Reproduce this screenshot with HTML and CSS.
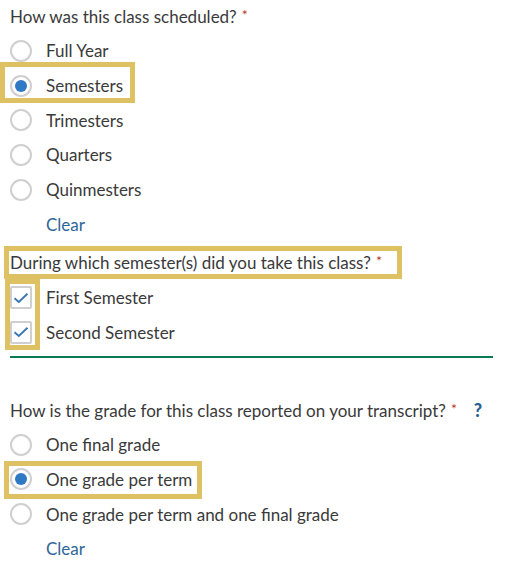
FILE: index.html
```html
<!DOCTYPE html>
<html lang="en">
<head>
<meta charset="utf-8">
<title>Class schedule</title>
<link rel="stylesheet" href="styles.css">
</head>
<body>
<form class="form">
  <fieldset class="group">
    <div class="question q-first"><span class="qtext">How was this class scheduled?</span><span class="req">*</span></div>
    <div class="row"><span class="radio"></span><span class="opt">Full Year</span></div>
    <div class="row hl hl-sem"><span class="radio checked"></span><span class="opt">Semesters</span></div>
    <div class="row"><span class="radio"></span><span class="opt">Trimesters</span></div>
    <div class="row"><span class="radio"></span><span class="opt">Quarters</span></div>
    <div class="row"><span class="radio"></span><span class="opt">Quinmesters</span></div>
    <div class="row"><a class="clear" href="#">Clear</a></div>
  </fieldset>

  <fieldset class="group group-checks">
    <div class="question hl hl-q2"><span class="qtext">During which semester(s) did you take this class?</span><span class="req">*</span></div>
    <div class="checks hl hl-checks">
      <div class="row"><span class="check"><svg viewBox="0 0 16 16" width="16" height="16"><path d="M1.5 8.3 L5.8 12 L14.5 3.8" fill="none" stroke="#3b77b3" stroke-width="1.9"/></svg></span><span class="opt">First Semester</span></div>
      <div class="row"><span class="check"><svg viewBox="0 0 16 16" width="16" height="16"><path d="M1.5 8.3 L5.8 12 L14.5 3.8" fill="none" stroke="#3b77b3" stroke-width="1.9"/></svg></span><span class="opt">Second Semester</span></div>
    </div>
    <div class="divider"></div>
  </fieldset>

  <fieldset class="group group-grade">
    <div class="question"><span class="qtext">How is the grade for this class reported on your transcript?</span><span class="req">*</span><span class="help">?</span></div>
    <div class="row"><span class="radio"></span><span class="opt">One final grade</span></div>
    <div class="row hl hl-term"><span class="radio checked"></span><span class="opt">One grade per term</span></div>
    <div class="row"><span class="radio"></span><span class="opt">One grade per term and one final grade</span></div>
    <div class="row"><a class="clear" href="#">Clear</a></div>
  </fieldset>
</form>
</body>
</html>
```

FILE: styles.css
```css
html, body {
  margin: 0;
  padding: 0;
  background: #ffffff;
}

body {
  font-family: Lato, "Noto Sans", sans-serif;
  font-size: 17px;
  color: #3a3a3a;
}

.form {
  padding: 0 0 0 10px;
}

.group {
  border: 0;
  margin: 0;
  padding: 0;
  min-width: 0;
}

.question {
  height: 34.7px;
  display: flex;
  align-items: center;
  position: relative;
}

.q-first {
  height: 33.5px;
}

.req {
  color: #b5332b;
  font-size: 14px;
  margin-left: 5px;
  transform: translateY(-2px);
}

.help {
  color: #2b5f93;
  font-weight: 900;
  font-size: 18px;
  margin-left: 17px;
}

.row {
  height: 34.7px;
  display: flex;
  align-items: center;
  gap: 14px;
  position: relative;
}

.radio {
  width: 22px;
  height: 22px;
  box-sizing: border-box;
  border: 2px solid #cfcfcf;
  border-radius: 50%;
  flex: none;
  display: flex;
  align-items: center;
  justify-content: center;
}

.radio.checked::before {
  content: "";
  width: 12px;
  height: 12px;
  border-radius: 50%;
  background: #3079c4;
}

.check {
  width: 22px;
  height: 23px;
  box-sizing: border-box;
  border: 2px solid #cfcfcf;
  border-radius: 2px;
  flex: none;
  display: flex;
  align-items: center;
  justify-content: center;
}

.clear {
  color: #2f6699;
  text-decoration: none;
  margin-left: 36px;
}

.hl::after {
  content: "";
  position: absolute;
  border: 5px solid #ddc163;
  pointer-events: none;
}

.hl-sem::after {
  left: -10px;
  width: 125px;
  top: -6px;
  height: 31px;
}

.group-checks {
  padding-top: 4px;
}

.hl-q2::after {
  left: -6px;
  width: 388px;
  top: 0;
  height: 23px;
}

.hl-checks {
  position: relative;
}

.hl-checks::after {
  left: -5px;
  width: 25px;
  top: -1px;
  bottom: 0;
}

.divider {
  height: 2px;
  background: #0b7a52;
  width: 483px;
  margin-top: 6px;
}

.group-grade {
  padding-top: 35px;
}

.hl-term::after {
  left: -6px;
  width: 188px;
  top: -1px;
  height: 28px;
}
```
